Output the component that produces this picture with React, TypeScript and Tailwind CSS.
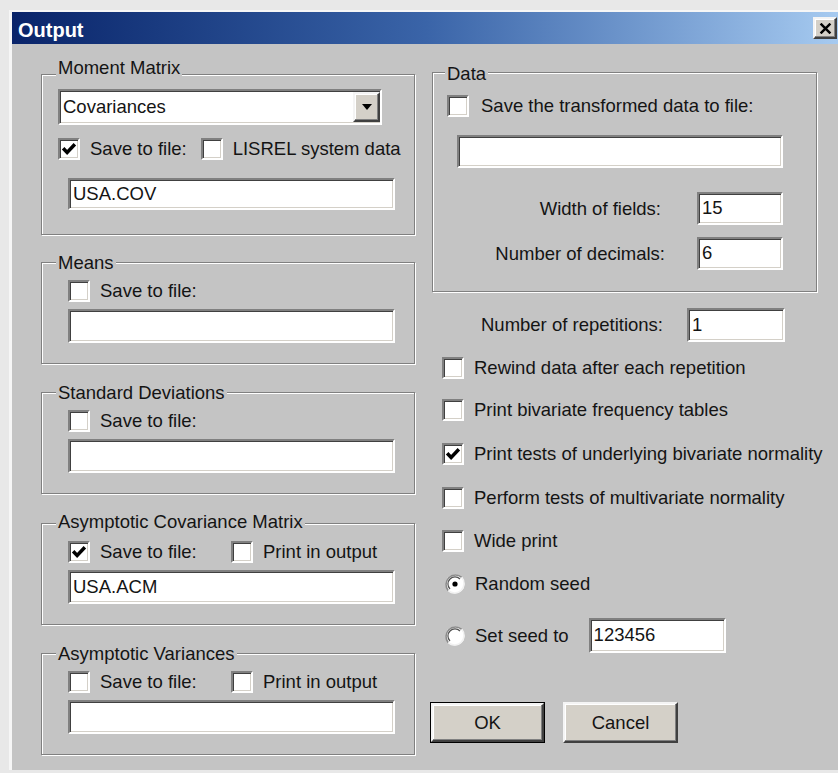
import type { ReactNode } from 'react';

const FACE = 'bg-[#d4d0c8]';

// sunken white box used by checkboxes and edit fields
const SUNKEN =
  'box-border border-2 border-t-[#808080] border-l-[#808080] border-b-white border-r-white bg-white shadow-[inset_1px_1px_0_#404040,inset_-1px_-1px_0_#d4d0c8]';

const RAISED =
  'box-border border-2 border-t-[#f4f4f4] border-l-[#f4f4f4] border-b-[#404040] border-r-[#404040] shadow-[inset_-1px_-1px_0_#808080,inset_1px_1px_0_#fff]';

function Check({ on = false }: { on?: boolean }) {
  return (
    <span className={`flex h-[22px] w-[22px] shrink-0 items-center justify-center ${SUNKEN}`}>
      {on && (
        <svg viewBox="0 0 12 12" className="h-[16px] w-[16px]">
          <path d="M1.6 5.4 L4.6 8.6 L10.4 2.4" fill="none" stroke="#000" strokeWidth="2.6" />
        </svg>
      )}
    </span>
  );
}

function Radio({ on = false }: { on?: boolean }) {
  return (
    <svg viewBox="0 0 20 20" className="h-[20px] w-[20px] shrink-0">
      <circle cx="10" cy="10" r="9.5" fill="#fff" />
      <path d="M3.3 16.7 A9.5 9.5 0 0 1 16.7 3.3" fill="none" stroke="#8a8a8a" strokeWidth="1.6" />
      <path d="M5 15 A7 7 0 0 1 15 5" fill="none" stroke="#505050" strokeWidth="1.2" />
      <path d="M16.7 3.3 A9.5 9.5 0 0 1 3.3 16.7" fill="none" stroke="#f2f2f2" strokeWidth="1.6" />
      {on && <circle cx="10" cy="10" r="2.6" fill="#000" />}
    </svg>
  );
}

function Field({ value = '', className = '' }: { value?: string; className?: string }) {
  return <div className={`flex items-center pl-[3px] leading-none ${SUNKEN} ${className}`}>{value}</div>;
}

function Group({
  label,
  labelTop,
  className,
  children,
}: {
  label: string;
  labelTop: string;
  className: string;
  children: ReactNode;
}) {
  return (
    <div
      className={`relative box-border border border-[#808080] shadow-[inset_1px_1px_0_#fff,1px_1px_0_#fff] ${className}`}
    >
      <span className={`absolute bg-[#c4c4c4] px-[2px] leading-[22px] ${labelTop}`}>{label}</span>
      {children}
    </div>
  );
}

function CheckRow({ label, on, className = '' }: { label: string; on?: boolean; className?: string }) {
  return (
    <div className={`flex h-[22px] items-center ${className}`}>
      <Check on={on} />
      <span className="ml-[10px] leading-[22px]">{label}</span>
    </div>
  );
}

// small group: one checkbox row (optionally two) above a filename box
function FileGroup({
  label,
  labelTop = '-top-[11px] left-[14px]',
  saved = false,
  name = '',
  withPrint = false,
  className = '',
}: {
  label: string;
  labelTop?: string;
  saved?: boolean;
  name?: string;
  withPrint?: boolean;
  className?: string;
}) {
  return (
    <Group label={label} labelTop={labelTop} className={`h-[102px] w-[374px] pl-[26px] pt-[17px] ${className}`}>
      <div className="flex h-[22px] items-center">
        <Check on={saved} />
        <span className="ml-[10px] w-[131px] leading-[22px]">Save to file:</span>
        {withPrint && (
          <>
            <Check />
            <span className="ml-[10px] leading-[22px]">Print in output</span>
          </>
        )}
      </div>
      <Field value={name} className="mt-[7px] h-[34px] w-[327px]" />
    </Group>
  );
}

export default function App() {
  return (
    <div
      className="h-[773px] w-[838px] overflow-hidden bg-[#e8e8e8] pl-[9px] pt-[10px] text-[18.5px] text-[#141414]"
      style={{ fontFamily: '"Liberation Sans", Arial, sans-serif' }}
    >
      <div className="h-[760px] border-l-[3px] border-t-2 border-l-[#f6f6f6] border-t-[#f6f6f6] bg-[#c4c4c4]">
        {/* title bar */}
        <div className="flex h-[32px] items-center justify-between bg-linear-to-r from-[#0a246a] via-[#3a64a8] to-[#a6caf0] pl-[6px] pr-[1px]">
          <span className="pt-[3px] text-[20px] font-bold leading-none text-white">Output</span>
          <button className={`flex h-[22px] w-[24px] items-center justify-center ${FACE} ${RAISED}`}>
            <svg viewBox="0 0 10 9" className="h-[11px] w-[13px]">
              <path d="M1 0.5 L9 8.5 M9 0.5 L1 8.5" stroke="#000" strokeWidth="2" />
            </svg>
          </button>
        </div>

        <div className="flex pl-[29px]">
          {/* left column */}
          <div className="flex w-[374px] flex-col pt-[30px]">
            <Group label="Moment Matrix" labelTop="-top-[18px] left-[14px]" className="h-[161px] w-[374px] pl-[16px] pt-[14px]">
              <div className={`relative h-[36px] w-[324px] ${SUNKEN}`}>
                <span className="absolute left-[3px] top-[5px] leading-[22px]">Covariances</span>
                <div className={`absolute bottom-[1px] right-0 top-[1px] flex w-[27px] items-center justify-center ${FACE} ${RAISED}`}>
                  <svg viewBox="0 0 10 6" className="h-[6px] w-[10px]">
                    <path d="M0 0 H10 L5 6 Z" fill="#000" />
                  </svg>
                </div>
              </div>
              <div className="mt-[13px] flex h-[22px] items-center">
                <Check on />
                <span className="ml-[10px] leading-[22px]">Save to file:</span>
                <span className="ml-[14px]">
                  <Check />
                </span>
                <span className="ml-[10px] leading-[22px]">LISREL system data</span>
              </div>
              <Field value="USA.COV" className="ml-[10px] mt-[18px] h-[32px] w-[327px]" />
            </Group>

            <FileGroup label="Means" className="mt-[27px]" />
            <FileGroup label="Standard Deviations" className="mt-[28px]" />
            <FileGroup
              label="Asymptotic Covariance Matrix"
              labelTop="-top-[13px] left-[14px]"
              saved
              name="USA.ACM"
              withPrint
              className="mt-[29px]"
            />
            <FileGroup label="Asymptotic Variances" withPrint className="mt-[28px]" />
          </div>

          {/* right column */}
          <div className="ml-[15px] flex flex-col pt-[28px]">
            <Group label="Data" labelTop="-top-[10px] left-[12px]" className="ml-[2px] h-[220px] w-[385px] pl-[14px] pt-[22px]">
              <CheckRow label="Save the transformed data to file:" className="[&>span:last-child]:ml-[12px]" />
              <Field className="ml-[10px] mt-[18px] h-[33px] w-[326px]" />
              <div className="mt-[24px] flex h-[33px] items-center justify-end pr-[33px]">
                <span className="leading-[22px]">Width of fields:</span>
                <Field value="15" className="ml-[36px] h-[33px] w-[86px]" />
              </div>
              <div className="mt-[12px] flex h-[33px] items-center justify-end pr-[33px]">
                <span className="leading-[22px]">Number of decimals:</span>
                <Field value="6" className="ml-[32px] h-[33px] w-[86px]" />
              </div>
            </Group>

            <div className="mt-[16px] flex h-[34px] w-[355px] items-center justify-end">
              <span className="leading-[22px]">Number of repetitions:</span>
              <Field value="1" className="ml-[24px] h-[34px] w-[98px]" />
            </div>

            <div className="flex flex-col pl-[12px]">
              <CheckRow label="Rewind data after each repetition" className="mt-[15px]" />
              <CheckRow label="Print bivariate frequency tables" className="mt-[20px]" />
              <CheckRow label="Print tests of underlying bivariate normality" on className="mt-[22px]" />
              <CheckRow label="Perform tests of multivariate normality" className="mt-[22px]" />
              <CheckRow label="Wide print" className="mt-[21px]" />
            </div>

            <div className="mt-[22px] flex h-[20px] items-center pl-[15px]">
              <Radio on />
              <span className="ml-[10px] leading-[22px]">Random seed</span>
            </div>
            <div className="mt-[24px] flex h-[35px] items-center pl-[15px]">
              <Radio />
              <span className="ml-[10px] leading-[22px]">Set seed to</span>
              <Field value="123456" className="ml-[20px] h-[35px] w-[137px]" />
            </div>

            <div className="mt-[49px] flex gap-[18px]">
              <div className="box-border h-[41px] w-[115px] border border-black">
                <button className={`flex h-full w-full items-center justify-center ${FACE} ${RAISED}`}>OK</button>
              </div>
              <button className={`flex h-[41px] w-[115px] items-center justify-center ${FACE} ${RAISED}`}>Cancel</button>
            </div>
          </div>
        </div>
      </div>
    </div>
  );
}
